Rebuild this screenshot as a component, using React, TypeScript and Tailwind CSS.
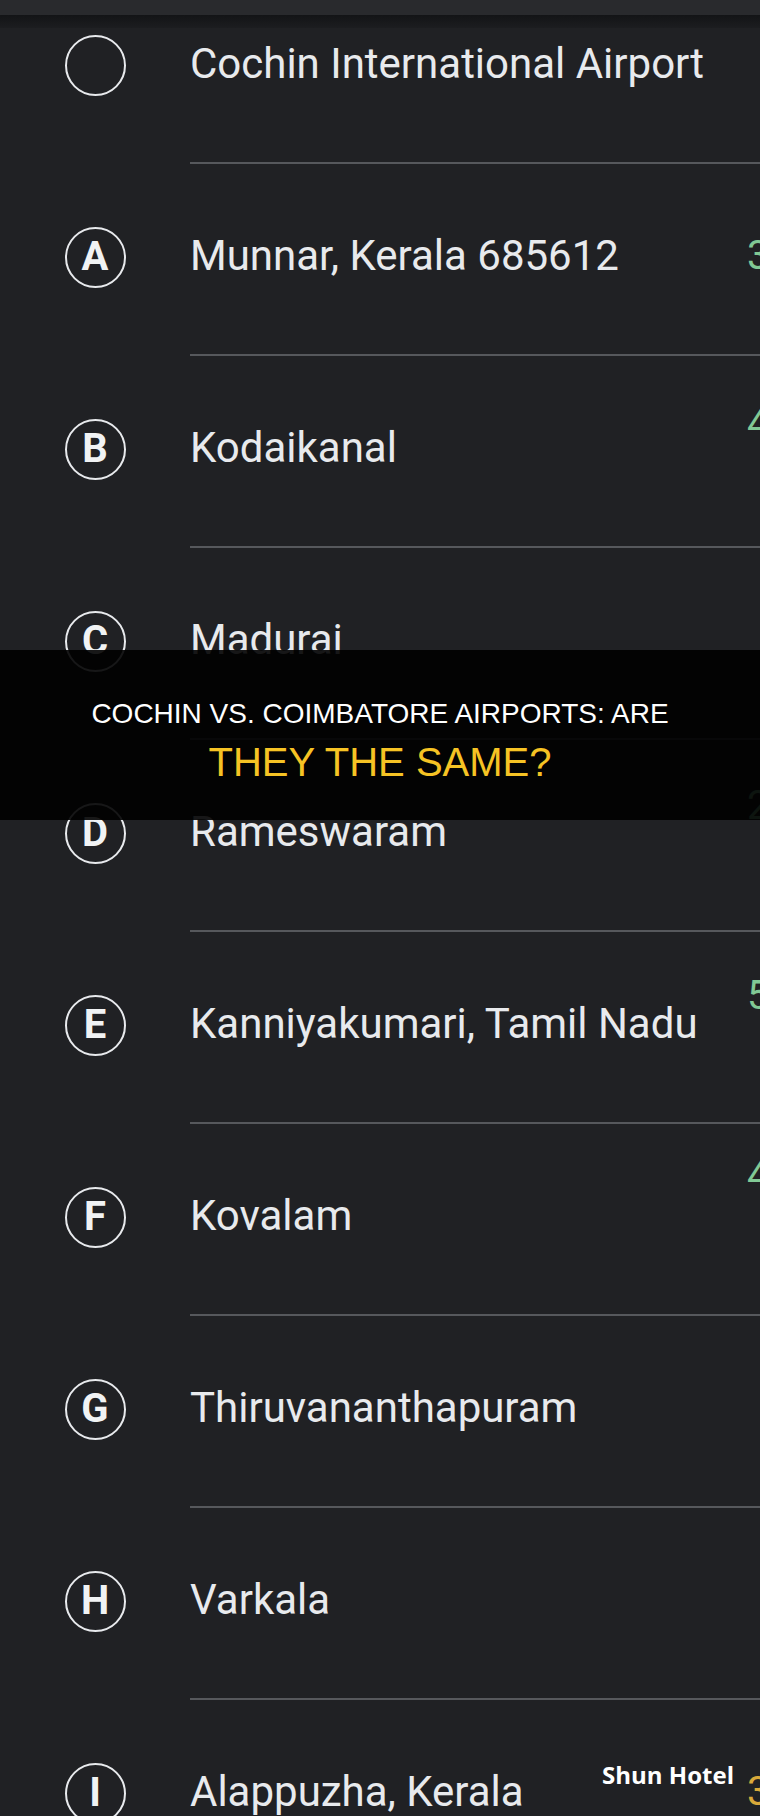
type Stop = {
  mark?: string;
  name: string;
  side?: string;
  sideClass?: string;
};

const stops: Stop[] = [
  { name: "Cochin International Airport" },
  { mark: "A", name: "Munnar, Kerala 685612", side: "3", sideClass: "text-[#81c995]" },
  { mark: "B", name: "Kodaikanal", side: "4", sideClass: "-translate-y-[24px] text-[#81c995]" },
  { mark: "C", name: "Madurai" },
  { mark: "D", name: "Rameswaram", side: "2", sideClass: "-translate-y-[26px] text-[#81c995]" },
  { mark: "E", name: "Kanniyakumari, Tamil Nadu", side: "5", sideClass: "-translate-y-[28px] text-[#81c995]" },
  { mark: "F", name: "Kovalam", side: "4", sideClass: "-translate-y-[40px] text-[#81c995]" },
  { mark: "G", name: "Thiruvananthapuram" },
  { mark: "H", name: "Varkala" },
  { mark: "I", name: "Alappuzha, Kerala", side: "3", sideClass: "text-[#d9a93a]" },
];

function Marker({ mark }: { mark?: string }) {
  return (
    <div className="flex size-[61px] items-center justify-center rounded-full border-[2.5px] border-[#e8eaed]">
      {mark && (
        <span className="font-['Roboto',sans-serif] text-[40px] font-bold leading-none text-[#f1f3f4]">
          {mark}
        </span>
      )}
    </div>
  );
}

function StopRow({ stop }: { stop: Stop }) {
  return (
    <div>
      <div className="flex h-[190px] items-center pb-[6px]">
        <div className="flex w-[190px] justify-center pt-[2px]">
          <Marker mark={stop.mark} />
        </div>
        <div className="w-[557px] font-['Roboto',sans-serif] text-[42px] leading-none text-[#e8eaed]">
          {stop.name}
        </div>
        {stop.side && (
          <div className={`font-['Roboto',sans-serif] text-[40px] leading-none ${stop.sideClass}`}>
            {stop.side} hr
          </div>
        )}
      </div>
      <div className="ml-[190px] h-[2px] bg-[#56585c]" />
    </div>
  );
}

export default function App() {
  return (
    <div className="relative h-[1816px] w-[760px] overflow-hidden bg-[#202124]">
      {/* status strip with its shadow */}
      <div className="absolute inset-x-0 top-0 z-10">
        <div className="h-[15px] bg-[#292a2d]" />
        <div className="h-[13px] bg-gradient-to-b from-[#131416] to-[#1c1d20]" />
      </div>

      <div className="-mt-[28px] w-[880px]">
        {stops.map((s) => (
          <StopRow key={s.name} stop={s} />
        ))}
      </div>

      {/* headline banner */}
      <div className="absolute inset-x-0 top-[650px] z-20 flex h-[170px] flex-col items-center justify-center gap-[3px] bg-black/[0.9] pt-[10px] font-['Liberation_Sans',Arial,sans-serif]">
        <div className="text-[28px] leading-[40px] text-white">COCHIN VS. COIMBATORE AIRPORTS: ARE</div>
        <div className="text-[40px] leading-[50px] text-[#f6c324]">THEY THE SAME?</div>
      </div>

      <div className="absolute right-[26px] top-[1760px] z-20 font-['Open_Sans',sans-serif] text-[24px] font-bold leading-[30px] text-white">
        Shun Hotel
      </div>
    </div>
  );
}
